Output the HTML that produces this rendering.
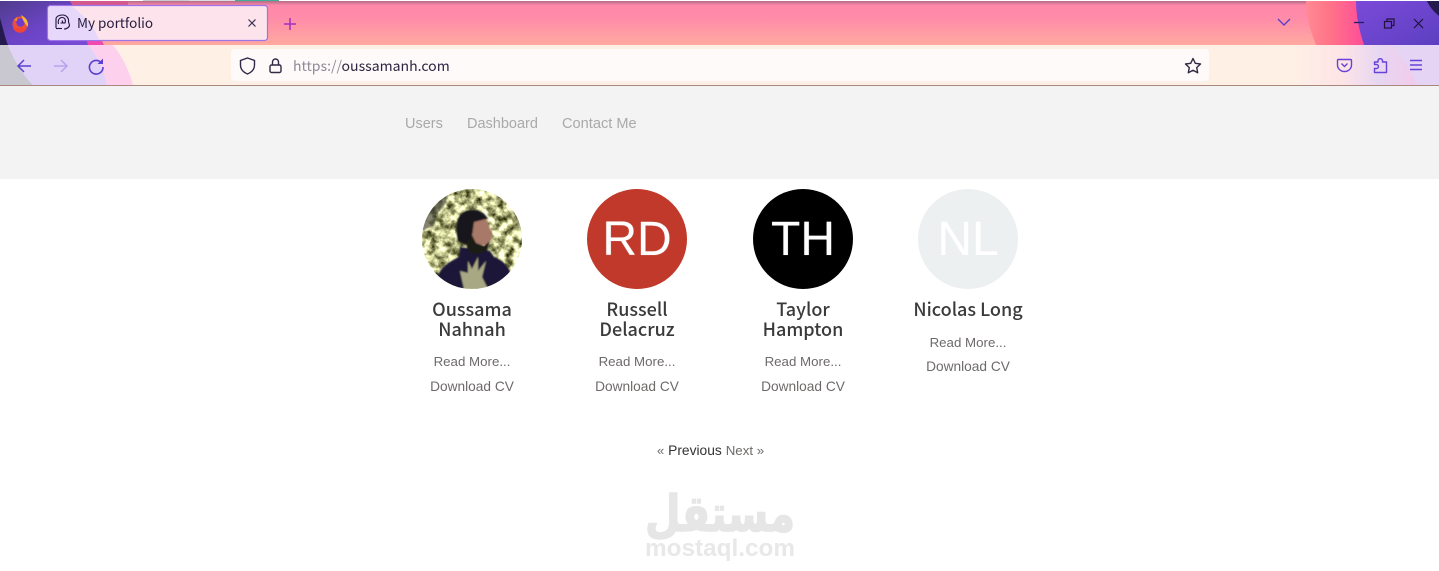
<!DOCTYPE html>
<html><head><meta charset="utf-8"><title>My portfolio</title>
<style>
*{box-sizing:border-box}
html,body{margin:0;padding:0;width:1439px;height:571px;overflow:hidden;background:#fff;font-family:"Liberation Sans",sans-serif}
.abs{position:absolute}
.t{position:absolute;white-space:nowrap}
.card{position:absolute;top:189px;width:166px;text-align:center}
.av{width:100px;height:100px;border-radius:50%;margin:0 auto;display:block;overflow:hidden;position:relative;color:#fff;font-size:48px;line-height:102px;letter-spacing:0;text-shadow:0 0 1px rgba(255,255,255,.45)}
.nm{font-family:"Noto Sans CJK SC","Liberation Sans",sans-serif;font-size:18px;line-height:20px;color:#3a3a3a;font-weight:500;margin-top:10px}
.lk{font-size:13.300px;color:#6f6a6a;line-height:20px}
.dl{font-size:13.700px}
</style></head><body>
<svg class="abs" style="left:0;top:0" width="1439" height="86" viewBox="0 0 1439 86">
<defs>
<linearGradient id="g" x1="0" y1="0" x2="0" y2="1"><stop offset="0" stop-color="#b56c8a"/><stop offset=".1" stop-color="#ff88a8"/><stop offset=".4" stop-color="#ff8ca8"/><stop offset="1" stop-color="#ffa9a0"/></linearGradient>
<linearGradient id="pl" x1="0" y1="0" x2="1" y2="1"><stop offset="0" stop-color="#4f3c8c"/><stop offset=".5" stop-color="#6a44c4"/><stop offset="1" stop-color="#7a4bd8"/></linearGradient>
<linearGradient id="hot" x1="0" y1="0" x2="1" y2="0"><stop offset="0" stop-color="#ff8a92"/><stop offset=".4" stop-color="#ff7488"/><stop offset="1" stop-color="#ff4d98"/></linearGradient>
<linearGradient id="pr" x1="0" y1="0" x2="1" y2="1"><stop offset="0" stop-color="#7a4ad8"/><stop offset=".6" stop-color="#6a44cb"/><stop offset="1" stop-color="#5b3fc0"/></linearGradient>
<linearGradient id="tr" x1="0" y1="0" x2="1" y2="0"><stop offset="0" stop-color="#fff0e6"/><stop offset=".35" stop-color="#fde4e6"/><stop offset=".6" stop-color="#e6d6f2"/><stop offset=".8" stop-color="#f0cdec"/><stop offset="1" stop-color="#f2c8ea"/></linearGradient>
</defs>
<rect width="1439" height="1" fill="#fff"/>
<rect y="1" width="1439" height="44" fill="url(#g)"/>
<rect x="143" y="0" width="46" height="1" fill="#ccc"/><rect x="189" y="0" width="46" height="1" fill="#ddd"/><rect x="235" y="0" width="44" height="1" fill="#3fae95"/>
<!-- left bar art -->
<rect x="70" y="1" width="58" height="6" fill="#d5588c"/>
<path d="M86 41H102L104 45H88Z" fill="#f04ab0"/>
<path d="M0 1H70C78 15 84 30 88 45H0Z" fill="url(#pl)"/>
<path d="M0 18C3 28 5 38 8 45H0Z" fill="#241a4e"/>
<!-- right bar art -->
<path d="M1306 1H1358C1358 18 1360 33 1364 45H1316C1310 30 1306 15 1306 1Z" fill="url(#hot)"/>
<path d="M1356 1H1439V45H1364C1359 30 1356 15 1356 1Z" fill="url(#pr)"/>
<path d="M1427 1H1439V16C1433 11 1429 6 1427 1Z" fill="#241a4e"/>
<!-- toolbar -->
<rect y="45" width="1439" height="40" fill="#fff0e6"/>
<path d="M1290 45H1439V85H1300Z" fill="url(#tr)"/>
<path d="M1417 85C1412 72 1402 58 1392 45H1439V85Z" fill="#e3d5f5" opacity=".9"/>
<path d="M0 45H8C14 60 22 74 33 85H0Z" fill="#c9c7cf"/>
<path d="M8 45H88C98 56 104 70 107 85H33C22 74 14 60 8 45Z" fill="#e0d3f7"/>
<path d="M88 45H113C122 56 129 70 133 85H107C104 70 98 56 88 45Z" fill="#fdd0ee"/>
<rect y="85" width="1439" height="1" fill="#a9877c"/>
<!-- tab -->
<rect x="47.500" y="5.500" width="220" height="35" rx="3" fill="#fde3ec" stroke="#9b74ea" stroke-width="1.200"/>
<path d="M48.500 9A3 3 0 0 1 51 6.500H72C85 16 95 28 99 40H51A3 3 0 0 1 48.500 37Z" fill="#e6d7fb"/>
<!-- urlbar -->
<rect x="231" y="49" width="978" height="32" rx="4" fill="#fffafa"/>
<!-- firefox -->
<circle cx="20" cy="24" r="7.500" fill="#ea4f3c"/><path d="M13 28A7.500 7.500 0 0 0 27 28Z" fill="#f0443a"/><circle cx="20.500" cy="22.500" r="4.200" fill="#6e3bd0"/><path d="M21 15C27 18 29 23 27.500 27L23.500 21Z" fill="#fdb72c"/><path d="M14 20L17 17L17 21Z" fill="#f08a2e"/>
<!-- tab icon -->
<g fill="none" stroke="#20123a" stroke-width="1.100"><path d="M56 28V19C56 16.500 59 15 62.500 15C66.500 15 69 18 68.500 22L69.500 25"/><path d="M58.500 24C57.500 20 59.500 17.500 62 17.500C65 17.500 66 20 65 23L60.500 23"/><path d="M62 20.500L63 23"/><path d="M64 29C67 29 69.500 27 69.500 25"/><path d="M56 28.500H62"/></g>
<path d="M248.500 19.500 l7 7 M255.500 19.500 l-7 7" stroke="#3b3355" stroke-width="1.200"/>
<path d="M290 18V30M284 24H296" stroke="#a12fc2" stroke-width="1.500"/>
<!-- nav -->
<path d="M31 66H18M24 60l-6 6 6 6" fill="none" stroke="#5b3fd0" stroke-width="1.500"/>
<path d="M67 66H54M61 60l6 6-6 6" fill="none" stroke="#b6a4ea" stroke-width="1.500"/>
<path d="M101.500 63A6.800 6.800 0 1 0 103 67" fill="none" stroke="#5b3fd0" stroke-width="1.600"/><path d="M103 58.500V64H97.500Z" fill="#5b3fd0"/>
<path d="M247.500 58L254.500 60.500V65C254.500 70 251 72.500 247.500 74C244 72.500 240.500 70 240.500 65V60.500Z" fill="none" stroke="#2f2a45" stroke-width="1.400"/>
<rect x="270" y="65" width="11" height="7.500" rx="1.500" fill="none" stroke="#2f2a45" stroke-width="1.400"/><path d="M272.500 65V62a3 3 0 0 1 6 0V65" fill="none" stroke="#2f2a45" stroke-width="1.400"/>
<path d="M1193 58.500L1195.300 63.300L1200.500 64L1196.700 67.600L1197.700 72.800L1193 70.300L1188.300 72.800L1189.300 67.600L1185.500 64L1190.700 63.300Z" fill="none" stroke="#2f2a45" stroke-width="1.400" stroke-linejoin="round"/>
<path d="M1278 19l6 6 6-6" fill="none" stroke="#5b3fd0" stroke-width="1.400"/>
<path d="M1354 22.500H1364" stroke="#2a1d5c" stroke-width="1.300"/>
<g fill="none" stroke="#20123a" stroke-width="1.200"><rect x="1384.500" y="21.500" width="7" height="6.500"/><path d="M1387 21.500V19H1394V25.500H1391.500"/><path d="M1414 19l9 9M1423 19l-9 9"/></g>
<path d="M1338.500 59.500H1350.500A1 1 0 0 1 1351.500 60.500V65A7 6.500 0 0 1 1337.500 65V60.500A1 1 0 0 1 1338.500 59.500Z" fill="none" stroke="#6a41d8" stroke-width="1.400"/><path d="M1341.500 63.500l3 3 3-3" fill="none" stroke="#6a41d8" stroke-width="1.400"/>
<path d="M1374.500 72.500V68.500H1376.500A2 2 0 0 0 1376.500 64.500H1374.500V62H1378V60.500A2.300 2.300 0 0 1 1382.500 60.500V62H1386.500V72.500Z" fill="none" stroke="#6a41d8" stroke-width="1.400" stroke-linejoin="round"/>
<path d="M1410 60.500H1422M1410 65H1422M1410 69.500H1422" stroke="#6a41d8" stroke-width="1.400"/>
<text x="77" y="28" font-family="'Noto Sans CJK SC','Liberation Sans',sans-serif" font-size="13.500" fill="#241c3c">My portfolio</text>
<text x="293" y="71" font-family="'Noto Sans CJK SC','Liberation Sans',sans-serif" font-size="14.050"><tspan fill="#8d8a98">https://</tspan><tspan fill="#2a2640">oussamanh.com</tspan></text>
</svg>

<div class="abs" style="left:0;top:86px;width:1439px;height:93px;background:#f3f3f3"></div>
<div class="t" style="left:405px;top:116px;font-size:14.500px;color:#a9a9a9">Users</div>
<div class="t" style="left:467px;top:116px;font-size:14.500px;color:#a9a9a9">Dashboard</div>
<div class="t" style="left:562px;top:116px;font-size:14.600px;color:#a9a9a9">Contact Me</div>

<div class="card" style="left:389px">
<svg class="av" viewBox="0 0 100 100"><defs>
<filter id="p" x="-10%" y="-10%" width="120%" height="120%"><feGaussianBlur stdDeviation="0.800"/></filter>
<filter id="n" x="0" y="0" width="100%" height="100%" color-interpolation-filters="sRGB"><feTurbulence type="fractalNoise" baseFrequency="0.12" numOctaves="4" seed="7"/><feColorMatrix type="matrix" values="2 0 0 0 -0.270  2 0 0 0 -0.260  1.800 0 0 0 -0.370  0 0 0 0 1"/></filter>
</defs>
<rect width="100" height="100" filter="url(#n)"/>
<path d="M0 0H26L24 14L14 26L12 36L0 42Z" fill="#33332f" opacity=".6" filter="url(#p)"/>
<g filter="url(#p)">
<path d="M12 100C14 82 24 74 37 68L38 58L68 62L72 68C84 72 92 84 92 100Z" fill="#1c1838"/>
<path d="M36 52C32 34 36 22 48 21C57 20 63 24 66 30L55 33L50 46L44 56Z" fill="#15131a"/>
<path d="M52 33L64 30L69 42L70 50L65 56L55 56L50 48Z" fill="#a87868"/>
<path d="M44 54L50 46L54 54L62 57L68 52L65 62L52 66L46 62Z" fill="#1d1b18"/>
<path d="M42 100L38 82L46 84L46 72L50 80L56 68L56 82L64 72L60 88L66 100Z" fill="#a9a884"/>
</g></svg>
<div class="nm">Oussama<br>Nahnah</div><div class="lk" style="margin-top:13px">Read More...</div><div class="lk dl" style="margin-top:5px">Download CV</div></div>

<div class="card" style="left:554px"><div class="av" style="background:#c0392b">RD</div>
<div class="nm">Russell<br>Delacruz</div><div class="lk" style="margin-top:13px">Read More...</div><div class="lk dl" style="margin-top:5px">Download CV</div></div>

<div class="card" style="left:720px"><div class="av" style="background:#000">TH</div>
<div class="nm">Taylor<br>Hampton</div><div class="lk" style="margin-top:13px">Read More...</div><div class="lk dl" style="margin-top:5px">Download CV</div></div>

<div class="card" style="left:885px"><div class="av" style="background:#ecf0f1">NL</div>
<div class="nm">Nicolas Long</div><div class="lk" style="margin-top:14px">Read More...</div><div class="lk dl" style="margin-top:4px">Download CV</div></div>

<div class="t" style="left:657px;top:442px;font-size:14px;color:#6f6a6a"><span style="font-size:13px">«</span> <span style="color:#333;font-size:13.800px">Previous</span> <span style="font-size:13.300px">Next »</span></div>

<svg class="abs" style="left:640px;top:485px" width="160" height="80" viewBox="0 0 160 80">
<text x="80" y="46" text-anchor="middle" direction="rtl" font-family="'DejaVu Sans',sans-serif" font-weight="bold" font-size="50" fill="#e6e6e6" stroke="#e6e6e6" stroke-width="1.500" textLength="150" lengthAdjust="spacingAndGlyphs">مستقل</text>
<text x="80" y="71" text-anchor="middle" font-family="'Liberation Sans',sans-serif" font-weight="bold" font-size="24" fill="#e8e8e8" textLength="150" lengthAdjust="spacingAndGlyphs">mostaql.com</text>
</svg>
</body></html>
